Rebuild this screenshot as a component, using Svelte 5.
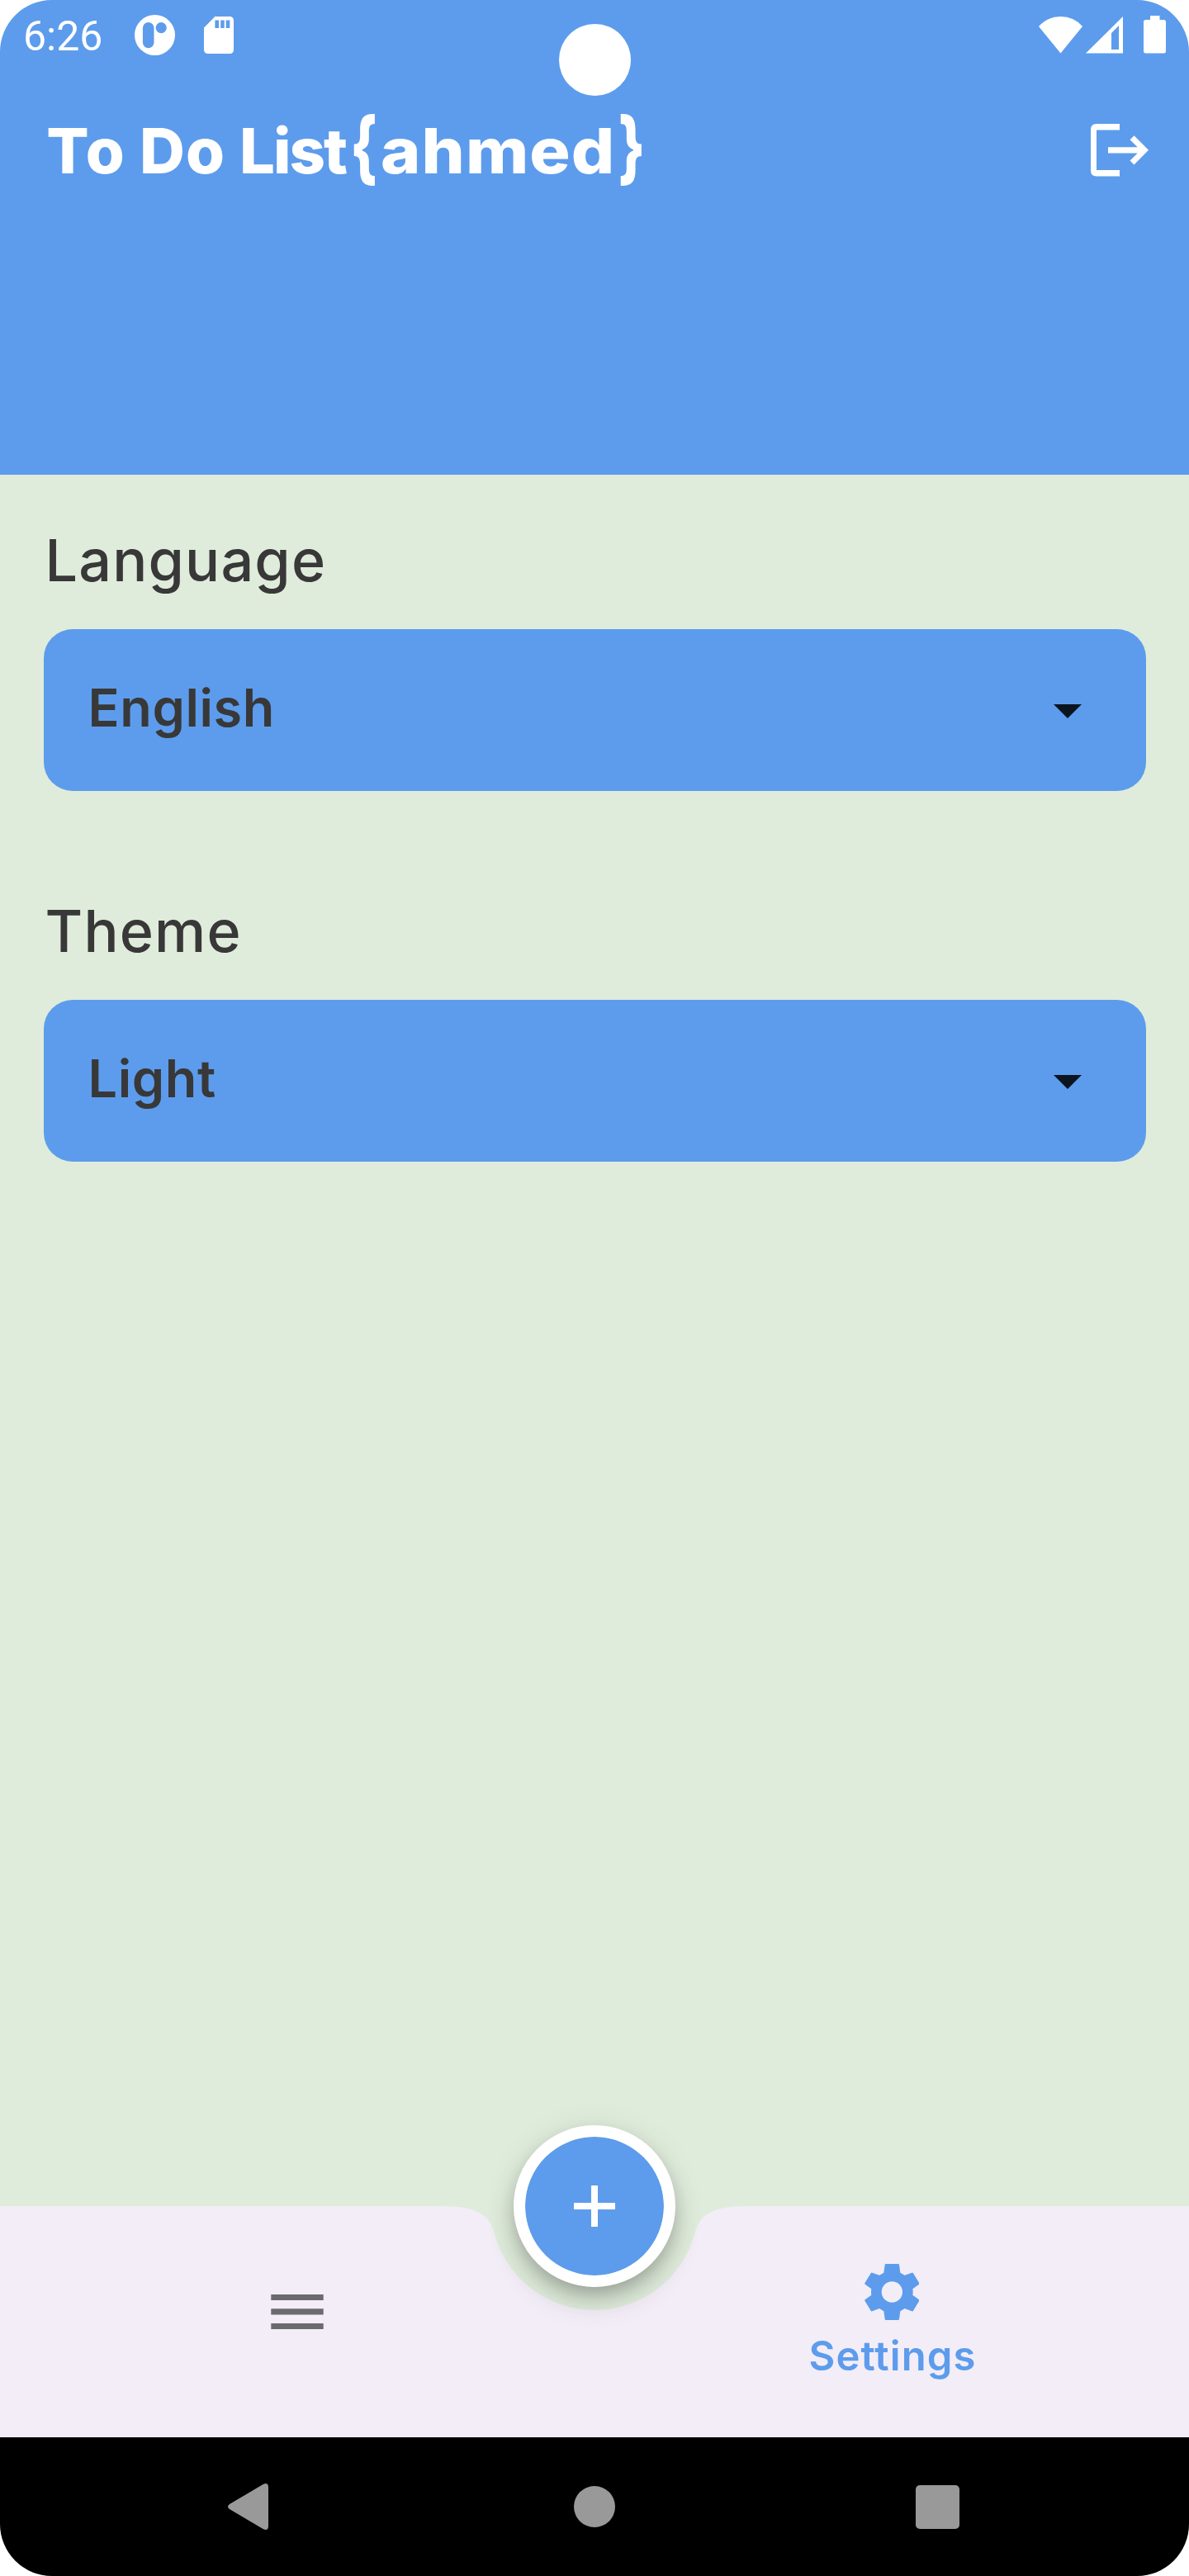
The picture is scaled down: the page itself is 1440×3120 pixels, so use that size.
<script>
  const fields = [
    { label: 'Language', value: 'English' },
    { label: 'Theme', value: 'Light' }
  ];
</script>

<div class="phone">
  <header class="top">
    <div class="status">
      <div class="status-left">
        <span class="time">6:26</span>
        <svg class="app-dot" viewBox="0 0 49 49">
          <path fill-rule="evenodd" d="M24.5 0a24.5 24.5 0 1 0 0 49a24.5 24.5 0 1 0 0-49zM16.7 9a6.8 6.8 0 0 1 6.8 6.8V33.4a6.8 6.8 0 0 1-13.6 0V15.8a6.8 6.8 0 0 1 6.8-6.8zM32.2 9a6.6 6.6 0 1 1 0 13.2a6.6 6.6 0 1 1 0-13.2z" />
        </svg>
        <svg class="sd" viewBox="0 0 36 45">
          <path fill-rule="evenodd" d="M13.4 0H31.5a4.5 4.5 0 0 1 4.5 4.5V40.5a4.5 4.5 0 0 1-4.5 4.5H4.5a4.5 4.5 0 0 1-4.5-4.5V13.4zM13.4 4.6V14H18V4.6zM20.2 4.6V14H24.7V4.6zM26.7 4.6V14H31.3V4.6z" />
        </svg>
      </div>
      <div class="status-right">
        <svg class="wifi" viewBox="0 0 53 45"><path d="M0 12Q10.5 0 26.5 0T53 12L26.5 44.5z" /></svg>
        <svg class="signal" viewBox="0 0 45 45"><path fill-rule="evenodd" d="M0 44.5L45 0V44.5zM31 20V40H40V11z" /></svg>
        <svg class="battery" viewBox="0 0 27 46"><path d="M8 0H19.5V5H24.5Q27 5 27 7.5V43Q27 45.5 24.5 45.5H2.5Q0 45.5 0 43V7.5Q0 5 2.5 5H8z" /></svg>
      </div>
      <div class="camera"></div>
    </div>
    <div class="appbar">
      <h1><span class="w-to">To</span><span class="w-do">Do</span><span class="w-list">List</span><span class="brace open">{'{'}</span><span class="w-user">ahmed</span><span class="brace close">{'}'}</span></h1>
      <svg class="logout" viewBox="0 0 70 64">
        <path d="M35 0V7.5H7V56H35V63.5H7Q0 63.5 0 56.5V7Q0 0 7 0z" />
        <path d="M21 28.2H56.7L47.5 19.3L52.5 14.2L70 31.8L52.5 49.5L47.5 44.5L56.7 35.6H21z" />
      </svg>
    </div>
  </header>

  <main>
    {#each fields as field}
      <section>
        <h2>{field.label}</h2>
        <div class="select">
          <span>{field.value}</span>
          <svg viewBox="0 0 34 17"><path d="M0 0H34L17 17z" /></svg>
        </div>
      </section>
    {/each}
  </main>

  <nav class="tabs">
    <svg class="tabs-bg" viewBox="0 0 1440 280">
      <path d="M0 0H538Q590.5 0 597.4 29.08A126 126 0 0 0 842.6 29.08Q849.5 0 902 0H1440V280H0z" />
    </svg>
    <div class="tab">
      <svg class="list" viewBox="0 0 64 42"><path d="M.3 0H63.7V7H.3zM.3 17.3H63.7V24.6H.3zM.3 35H63.7V42H.3z" /></svg>
    </div>
    <div class="tab active">
      <svg class="gear" viewBox="380 306 200 204">
        <path fill-rule="evenodd" d="M458 306H502Q505 306 506 309L510 338L526 347L552 338Q555 337 557 340L579 376Q580 379 577 381L555 397Q557 408 555 419L577 435Q580 437 579 440L557 476Q555 479 552 478L526 468L510 478L506 507Q505 510 502 510H458Q455 510 454 507L450 478L434 468L408 478Q405 479 403 476L381 440Q380 437 383 435L405 419Q403 408 405 397L383 381Q380 379 381 376L403 340Q405 337 408 338L434 347L450 338L454 309Q455 306 458 306zM480 370a38 38 0 1 0 0 76a38 38 0 1 0 0-76z" />
      </svg>
      <span>Settings</span>
    </div>
    <div class="fab">
      <svg viewBox="0 0 50 50"><path d="M21 0H29V21H50V29H29V50H21V29H0V21H21z" /></svg>
    </div>
  </nav>

  <footer class="system">
    <svg class="back" viewBox="0 0 49 56"><path d="M43 .7Q48.7-1.5 49 4V52Q48.7 57.5 43 55.3L2 31Q-2 28 2 25z" /></svg>
    <div class="home"></div>
    <div class="recent"></div>
  </footer>
</div>

<style>
  :global(body) {
    margin: 0;
    background: #fff;
  }
  .phone {
    width: 1440px;
    height: 3120px;
    display: flex;
    flex-direction: column;
    overflow: hidden;
    border-radius: 63px;
    background: #dfecdb;
    font-family: Inter, sans-serif;
    color: #383838;
  }
  svg {
    display: block;
    flex: none;
    fill: currentColor;
  }
  .top {
    box-sizing: border-box;
    height: 575.2px;
    flex: none;
    background: #5d9cec;
    color: #fff;
  }
  .status {
    position: relative;
    box-sizing: border-box;
    height: 84px;
    padding: 0 28px;
    display: flex;
    justify-content: space-between;
    align-items: center;
  }
  .status-left,
  .status-right {
    display: flex;
    align-items: center;
    height: 84px;
  }
  .time {
    width: 135px;
    font: 400 50px/84px Roboto, sans-serif;
    padding-top: 3px;
  }
  .app-dot {
    width: 49px;
    height: 49px;
  }
  .sd {
    width: 36px;
    height: 45px;
    margin-left: 34.5px;
  }
  .wifi {
    width: 53px;
    height: 45px;
  }
  .signal {
    width: 45px;
    height: 45px;
    margin-left: 4px;
  }
  .battery {
    width: 27px;
    height: 46px;
    margin-left: 25px;
  }
  .camera {
    position: absolute;
    left: 677px;
    top: 29px;
    width: 87px;
    height: 87px;
    border-radius: 50%;
    background: #fff;
  }
  .appbar {
    height: 196px;
    padding: 0 49px 0 56.3px;
    display: flex;
    align-items: center;
    justify-content: space-between;
  }
  h1 {
    margin: 0 0 2px;
    display: flex;
    align-items: baseline;
    font-weight: 800;
    font-size: 76px;
    line-height: 90px;
  }
  .w-to {
    width: 112.7px;
    letter-spacing: 2px;
  }
  .w-do {
    width: 121px;
    letter-spacing: 1px;
  }
  .w-list {
    width: 130.3px;
    letter-spacing: -2px;
  }
  .w-user {
    width: 284.4px;
    letter-spacing: 1px;
    transform: scaleX(1.083);
    transform-origin: 0 0;
  }
  .brace {
    width: 40.3px;
    font-size: 84px;
    transform: translateY(-2.6px) scale(0.8, 1.14);
  }
  .open {
    transform-origin: 21.7px 50%;
  }
  .close {
    transform-origin: 19px 50%;
  }
  .logout {
    width: 70px;
    height: 64px;
  }
  main {
    flex: 1;
    padding: 62.3px 52.5px 0;
  }
  section {
    height: 449px;
  }
  h2 {
    margin: 0;
    padding-left: 2px;
    height: 124.5px;
    font-weight: 500;
    font-size: 70px;
    line-height: 84px;
    letter-spacing: 1.2px;
  }
  .select {
    height: 196px;
    box-sizing: border-box;
    padding: 0 77.5px 0 54px;
    border-radius: 35px;
    background: #5d9cec;
    display: flex;
    align-items: center;
    justify-content: space-between;
    font-weight: 600;
    font-size: 63px;
    letter-spacing: 0.6px;
  }
  .select span {
    padding-bottom: 5px;
  }
  .select svg {
    width: 34px;
    height: 17px;
    margin-top: 3px;
    color: #0b151f;
  }
  .tabs {
    position: relative;
    height: 280px;
    flex: none;
    display: flex;
  }
  .tabs-bg {
    position: absolute;
    inset: 0;
    width: 1440px;
    height: 280px;
    color: #f3edf7;
  }
  .tab {
    position: relative;
    width: 50%;
    display: flex;
    flex-direction: column;
    align-items: center;
  }
  .list {
    width: 64px;
    height: 42px;
    margin-top: 107px;
    color: #6b6a6f;
  }
  .active {
    color: #5d9cec;
    font-weight: 600;
    font-size: 49px;
    line-height: 60px;
    letter-spacing: 1.1px;
  }
  .active span {
    padding-left: 2px;
  }
  .gear {
    width: 66.7px;
    height: 68px;
    margin: 70px 0 13.5px;
  }
  .fab {
    position: absolute;
    left: 622px;
    top: -98px;
    box-sizing: border-box;
    width: 196px;
    height: 196px;
    border: 14px solid #fff;
    border-radius: 50%;
    background: #5d9cec;
    background-clip: padding-box;
    color: #fff;
    display: flex;
    align-items: center;
    justify-content: center;
    box-shadow:
      0 10.5px 20px -3.5px rgba(0, 0, 0, 0.2),
      0 21px 36px 0 rgba(0, 0, 0, 0.11),
      0 3.5px 40px 0 rgba(0, 0, 0, 0.08);
  }
  .fab svg {
    width: 50px;
    height: 50px;
  }
  .system {
    height: 168px;
    flex: none;
    box-sizing: border-box;
    padding: 0 278.5px 0 276px;
    display: flex;
    align-items: center;
    justify-content: space-between;
    background: #000;
    color: #999;
  }
  .back {
    width: 49px;
    height: 56px;
  }
  .home {
    width: 50px;
    height: 50px;
    margin-left: 6.5px;
    border-radius: 50%;
    background: #999;
  }
  .recent {
    width: 53px;
    height: 53px;
    border-radius: 5px;
    background: #999;
  }
</style>
